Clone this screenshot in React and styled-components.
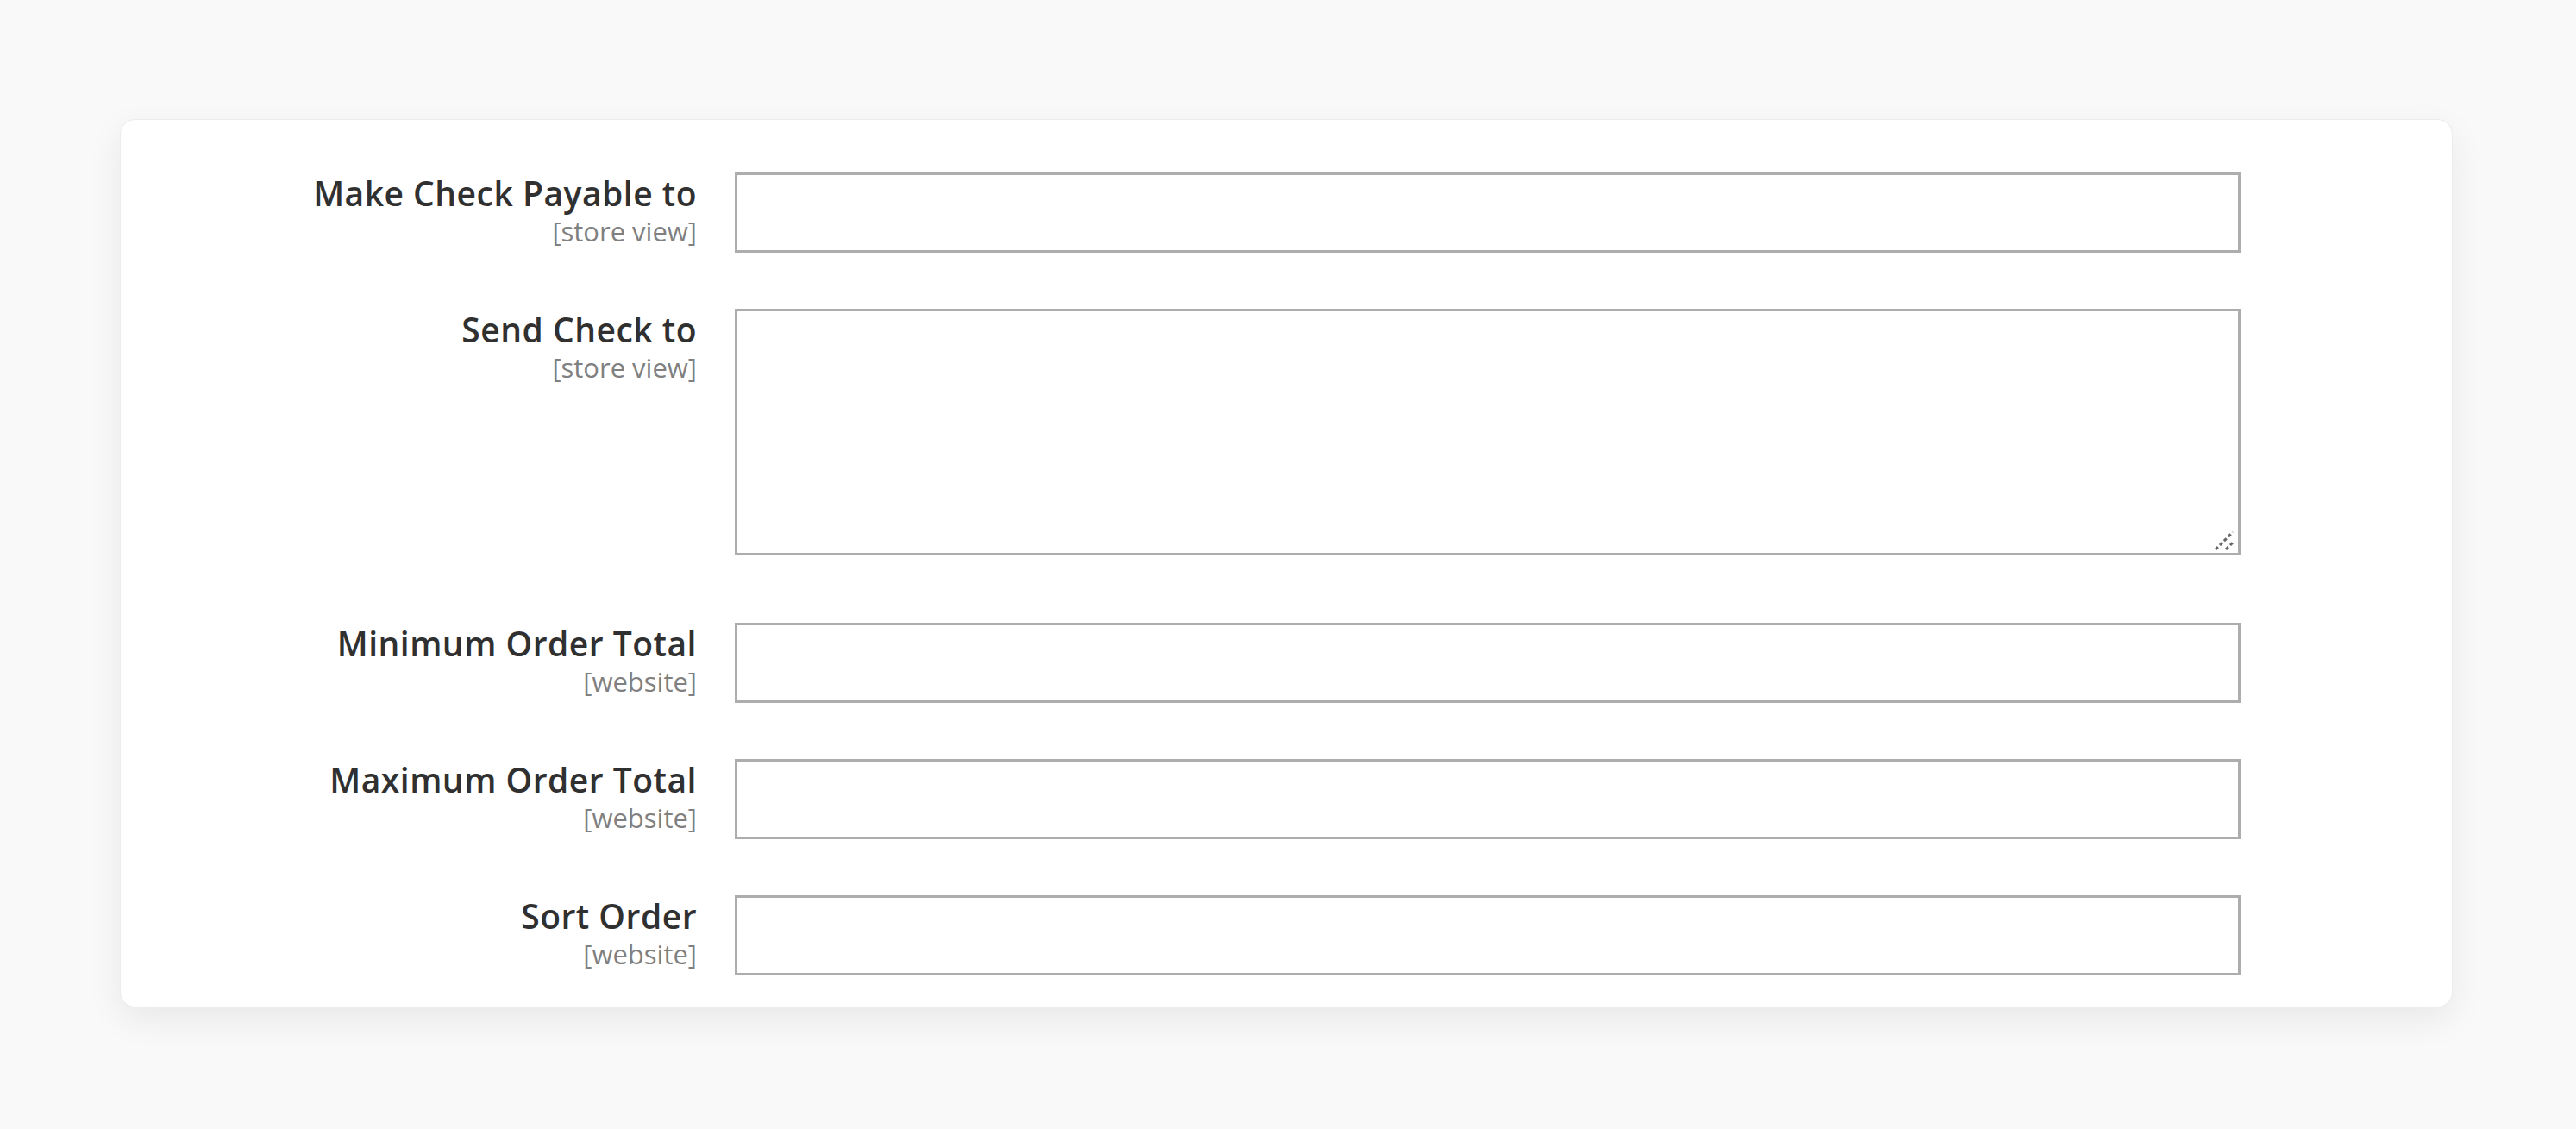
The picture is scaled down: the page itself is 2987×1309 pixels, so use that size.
import React from "react";
import styled, { createGlobalStyle } from "styled-components";

const GlobalStyle = createGlobalStyle`
  html, body {
    margin: 0;
    padding: 0;
    background: #f9f9f9;
  }
  body {
    font-family: "Open Sans", "Liberation Sans", sans-serif;
  }
`;

const rows = [
  { label: "Make Check Payable to", scope: "[store view]" },
  { label: "Send Check to", scope: "[store view]", multiline: true },
  { label: "Minimum Order Total", scope: "[website]" },
  { label: "Maximum Order Total", scope: "[website]" },
  { label: "Sort Order", scope: "[website]" },
];

const Page = () => {
  return (
    <Wrapper>
      <GlobalStyle />
      <Card>
        {rows.map((r) => (
          <Row key={r.label} $tall={r.multiline}>
            <Label>
              <span className="title">{r.label}</span>
              <span className="scope">{r.scope}</span>
            </Label>
            <Field>
              {r.multiline ? (
                <AreaBox>
                  <TextArea />
                  <Grip width="22" height="22" viewBox="0 0 22 22">
                    <path d="M1 21 L21 1" stroke="#666" strokeWidth="3" strokeDasharray="4 3" />
                    <path d="M13 21 L21 13" stroke="#666" strokeWidth="3" strokeDasharray="4 3" />
                  </Grip>
                </AreaBox>
              ) : (
                <Input type="text" />
              )}
            </Field>
          </Row>
        ))}
      </Card>
    </Wrapper>
  );
};

const Wrapper = styled.div`
  padding: 138px 143px 0 139px;
  min-height: 1309px;
  box-sizing: border-box;
`;

const Card = styled.div`
  background: #ffffff;
  border: 1px solid #ececec;
  border-radius: 18px;
  box-shadow: 0 14px 40px rgba(0, 0, 0, 0.07);
  padding: 61px 0 36px 0;
  display: flex;
  flex-direction: column;
  gap: 65px;
`;

const Row = styled.div`
  display: flex;
  align-items: flex-start;
  margin-bottom: ${(p) => (p.$tall ? "13px" : "0")};
`;

const Label = styled.div`
  width: 668px;
  margin-right: 44px;
  padding-top: 1px;
  display: flex;
  flex-direction: column;
  align-items: flex-end;
  text-align: right;
  .title {
    font-size: 39px;
    font-weight: 600;
    line-height: 1.2;
    letter-spacing: 0.5px;
    color: #303030;
  }
  .scope {
    margin-top: 2px;
    font-size: 31px;
    line-height: 1.2;
    color: #808080;
  }
`;

const Field = styled.div`
  width: 1746px;
`;

const Input = styled.input`
  display: block;
  width: 100%;
  height: 93px;
  box-sizing: border-box;
  border: 3px solid #adadad;
  border-radius: 0;
  background: #fff;
  outline: none;
  padding: 0 20px;
  font-family: inherit;
  font-size: 39px;
`;

const AreaBox = styled.div`
  position: relative;
`;

const TextArea = styled.textarea`
  display: block;
  width: 100%;
  height: 286px;
  box-sizing: border-box;
  border: 3px solid #adadad;
  border-radius: 0;
  background: #fff;
  outline: none;
  resize: none;
  padding: 16px 20px;
  font-family: inherit;
  font-size: 39px;
`;

const Grip = styled.svg`
  position: absolute;
  right: 8px;
  bottom: 6px;
  pointer-events: none;
`;

export default function App() {
  return <Page />;
}
